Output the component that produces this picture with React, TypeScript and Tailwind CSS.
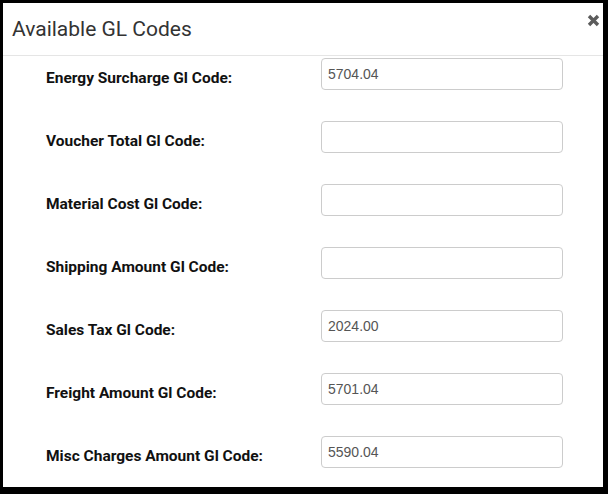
const rows = [
  { label: 'Energy Surcharge Gl Code:', value: '5704.04' },
  { label: 'Voucher Total Gl Code:', value: '' },
  { label: 'Material Cost Gl Code:', value: '' },
  { label: 'Shipping Amount Gl Code:', value: '' },
  { label: 'Sales Tax Gl Code:', value: '2024.00' },
  { label: 'Freight Amount Gl Code:', value: '5701.04' },
  { label: 'Misc Charges Amount Gl Code:', value: '5590.04' },
];

export default function App() {
  return (
    <div className="w-[608px] h-[494px] bg-black pt-[3px] pl-[3px] pr-[5px] pb-[7px]">
      <div className="h-full bg-white flex flex-col overflow-hidden">
        <div className="h-[53px] shrink-0 border-b border-[#e5e5e5] flex justify-between pl-[9px] pr-[3px]">
          <h4 className="pt-[13px] text-[21px] leading-[26px] text-[#333] font-['Roboto',sans-serif]">
            Available GL Codes
          </h4>
          <button className="mt-[10px] w-[14px] h-[14px] flex items-center justify-center">
            <svg width="13" height="13" viewBox="0 0 13 13">
              <path d="M2 2 L11 11 M11 2 L2 11" stroke="#5c5c5c" strokeWidth="3.4" strokeLinecap="butt" />
            </svg>
          </button>
        </div>
        <div className="pt-[2px] flex flex-col gap-[31px]">
          {rows.map((r) => (
            <div key={r.label} className="flex h-[32px]">
              <label className="w-[275px] ml-[43px] pt-[9px] text-[15.5px] leading-[22px] font-bold text-[#111] font-['Roboto',sans-serif]">
                {r.label}
              </label>
              <input
                readOnly
                value={r.value}
                className="w-[242px] h-[32px] px-[6px] border border-[#ccc] rounded-[4px] text-[14px] text-[#555] font-['Liberation_Sans',Arial,sans-serif] outline-none"
              />
            </div>
          ))}
        </div>
      </div>
    </div>
  );
}
